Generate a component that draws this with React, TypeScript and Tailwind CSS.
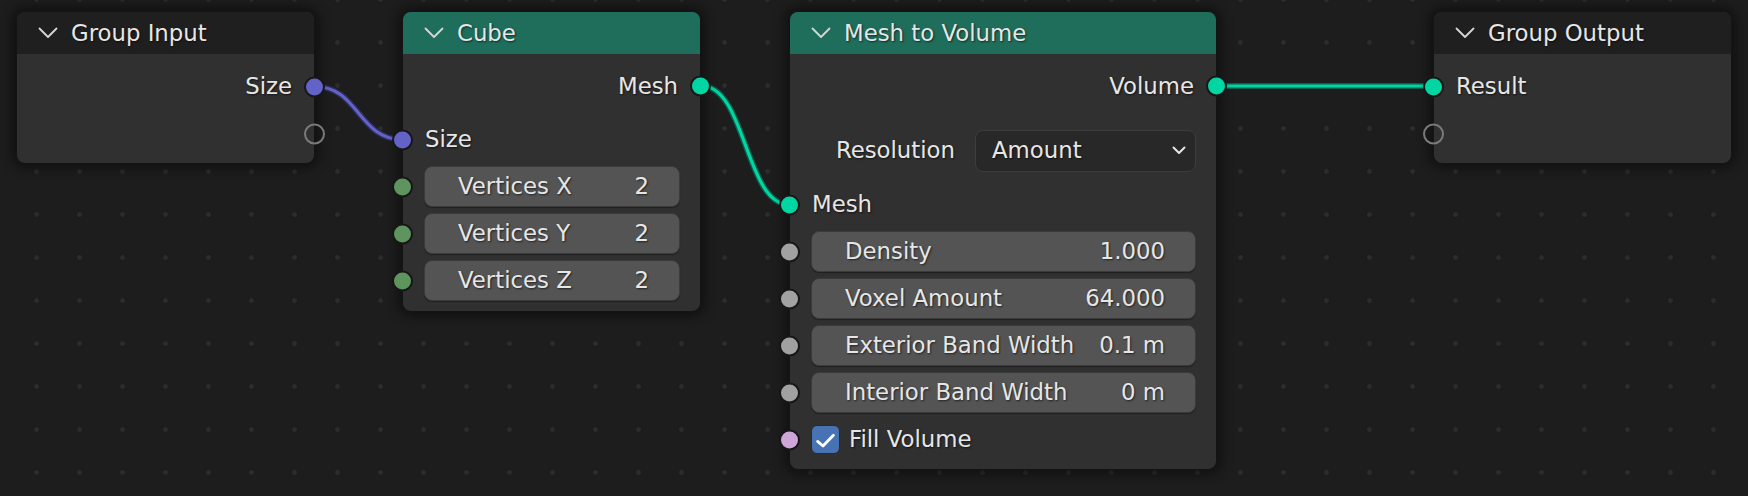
import React from "react";

const TXT =
  "font-['DejaVu_Sans',sans-serif] text-[22.8px] leading-none text-[#e6e6e6] [text-shadow:1px_1px_2px_rgba(0,0,0,0.6)] whitespace-nowrap";

function Chevron() {
  return (
    <svg width="20" height="12" viewBox="0 0 20 12" className="shrink-0">
      <path
        d="M1.5 1.5 L10 10 L18.5 1.5"
        fill="none"
        stroke="#d6d6d6"
        strokeWidth="1.8"
        strokeLinecap="round"
        strokeLinejoin="round"
      />
    </svg>
  );
}

function Socket({
  color,
  side,
  hollow,
}: {
  color?: string;
  side: "left" | "right";
  hollow?: boolean;
}) {
  const pos = side === "left" ? "left-[-11px]" : "right-[-11px]";
  if (hollow) {
    return (
      <div
        className={`absolute ${pos} top-1/2 -translate-y-1/2 w-[21px] h-[21px] rounded-full border-[2px] border-[#7a7a7a]`}
      />
    );
  }
  return (
    <div
      className={`absolute ${pos} top-1/2 -translate-y-1/2 w-[21px] h-[21px] rounded-full border-[2px] border-[#171717]`}
      style={{ backgroundColor: color }}
    />
  );
}

function Header({ title, teal }: { title: string; teal?: boolean }) {
  return (
    <div
      className={`flex items-center h-[42px] pl-[21px] gap-[13px] rounded-t-[8px] ${
        teal ? "bg-[#1e6e5b]" : "bg-[#1f1f1f]"
      }`}
    >
      <Chevron />
      <span className={TXT}>{title}</span>
    </div>
  );
}

function OutRow({ label, color, h = "h-[46px]" }: { label: string; color: string; h?: string }) {
  return (
    <div className={`relative flex items-center justify-end ${h} pr-[22px]`}>
      <span className={TXT}>{label}</span>
      <Socket side="right" color={color} />
    </div>
  );
}

function InRow({ label, color, h = "h-[47px]" }: { label: string; color: string; h?: string }) {
  return (
    <div className={`relative flex items-center ${h} pl-[22px]`}>
      <span className={TXT}>{label}</span>
      <Socket side="left" color={color} />
    </div>
  );
}

function FieldRow({ label, value, color }: { label: string; value: string; color: string }) {
  return (
    <div className="relative flex items-center h-[47px] pl-[21px] pr-[20px]">
      <Socket side="left" color={color} />
      <div className="flex-1 h-[41px] rounded-[8px] bg-[#545454] border border-[#3b3b3b] shadow-[0_1px_1px_rgba(0,0,0,0.35)] flex items-center justify-between pl-[33px] pr-[30px]">
        <span className={TXT}>{label}</span>
        <span className={TXT}>{value}</span>
      </div>
    </div>
  );
}

const NODE =
  "absolute rounded-[9px] bg-[#303030] border border-[#141414] shadow-[0_0_12px_4px_rgba(0,0,0,0.45)] flex flex-col";

function bez(x1: number, y1: number, x2: number, y2: number) {
  const d = Math.abs(x2 - x1) * 0.5;
  return `M${x1} ${y1} C${x1 + d} ${y1} ${x2 - d} ${y2} ${x2} ${y2}`;
}

function Link({ d, color, dark }: { d: string; color: string; dark: string }) {
  return (
    <g fill="none" strokeLinecap="round">
      <path d={d} stroke={dark} strokeWidth="6" />
      <path d={d} stroke={color} strokeWidth="3.2" />
    </g>
  );
}

export default function App() {
  return (
    <div className="relative w-[1748px] h-[496px] overflow-hidden bg-[#1d1d1d] bg-[radial-gradient(circle,#2c2c2c_0px,#2c2c2c_2px,transparent_2.6px)] bg-[length:43px_43px] bg-[position:15px_21px]">
      <svg className="absolute inset-0 pointer-events-none" width="1748" height="496">
        <Link d={bez(315, 86.5, 402, 139.5)} color="#6262c8" dark="#2c2c58" />
        <Link d={bez(702, 86, 789, 204.5)} color="#00d6a3" dark="#0a5e4a" />
        <Link d={bez(1216, 86, 1433, 86)} color="#00d6a3" dark="#0a5e4a" />
      </svg>

      {/* Group Input */}
      <div className={`${NODE} left-[16px] top-[11px] w-[299px]`}>
        <Header title="Group Input" />
        <div className="flex flex-col pt-[9px] pb-[6px]">
          <OutRow label="Size" color="#6363c7" h="h-[47px]" />
          <div className="relative h-[47px]">
            <Socket side="right" hollow />
          </div>
        </div>
      </div>

      {/* Cube */}
      <div className={`${NODE} left-[402px] top-[11px] w-[299px]`}>
        <Header title="Cube" teal />
        <div className="flex flex-col pt-[9px] pb-[7px]">
          <OutRow label="Mesh" color="#00d6a3" />
          <div className="mt-[7px]">
            <InRow label="Size" color="#6363c7" />
          </div>
          <FieldRow label="Vertices X" value="2" color="#5e955f" />
          <FieldRow label="Vertices Y" value="2" color="#5e955f" />
          <FieldRow label="Vertices Z" value="2" color="#5e955f" />
        </div>
      </div>

      {/* Mesh to Volume */}
      <div className={`${NODE} left-[789px] top-[11px] w-[428px]`}>
        <Header title="Mesh to Volume" teal />
        <div className="flex flex-col pt-[9px] pb-[6px]">
          <OutRow label="Volume" color="#00d6a3" />
          <div className="mt-[18px] h-[47px] flex items-center pl-[21px] pr-[20px]">
            <span className={`${TXT} flex-1 text-right pr-[20px]`}>Resolution</span>
            <div className="w-[221px] h-[42px] rounded-[8px] bg-[#282828] border border-[#3d3d3d] flex items-center justify-between pl-[16px] pr-[9px]">
              <span className={TXT}>Amount</span>
              <svg width="14" height="9" viewBox="0 0 14 9">
                <path
                  d="M1.5 1.5 L7 7 L12.5 1.5"
                  fill="none"
                  stroke="#e6e6e6"
                  strokeWidth="2"
                  strokeLinecap="round"
                  strokeLinejoin="round"
                />
              </svg>
            </div>
          </div>
          <div className="mt-[7px]">
            <InRow label="Mesh" color="#00d6a3" />
          </div>
          <FieldRow label="Density" value="1.000" color="#a1a1a1" />
          <FieldRow label="Voxel Amount" value="64.000" color="#a1a1a1" />
          <FieldRow label="Exterior Band Width" value="0.1 m" color="#a1a1a1" />
          <FieldRow label="Interior Band Width" value="0 m" color="#a1a1a1" />
          <div className="relative h-[47px] flex items-center pl-[21px] gap-[9px]">
            <Socket side="left" color="#cca6d6" />
            <div className="w-[29px] h-[29px] rounded-[6px] bg-[#4772b3] border border-[#2a2a2a] flex items-center justify-center">
              <svg width="29" height="29" viewBox="0 0 29 29">
                <path
                  d="M6 16.5 L11.8 21.5 L23 10"
                  fill="none"
                  stroke="#ffffff"
                  strokeWidth="3"
                  strokeLinecap="round"
                  strokeLinejoin="round"
                />
              </svg>
            </div>
            <span className={TXT}>Fill Volume</span>
          </div>
        </div>
      </div>

      {/* Group Output */}
      <div className={`${NODE} left-[1433px] top-[11px] w-[299px]`}>
        <Header title="Group Output" />
        <div className="flex flex-col pt-[9px] pb-[6px]">
          <InRow label="Result" color="#00d6a3" />
          <div className="relative h-[47px]">
            <Socket side="left" hollow />
          </div>
        </div>
      </div>
    </div>
  );
}
